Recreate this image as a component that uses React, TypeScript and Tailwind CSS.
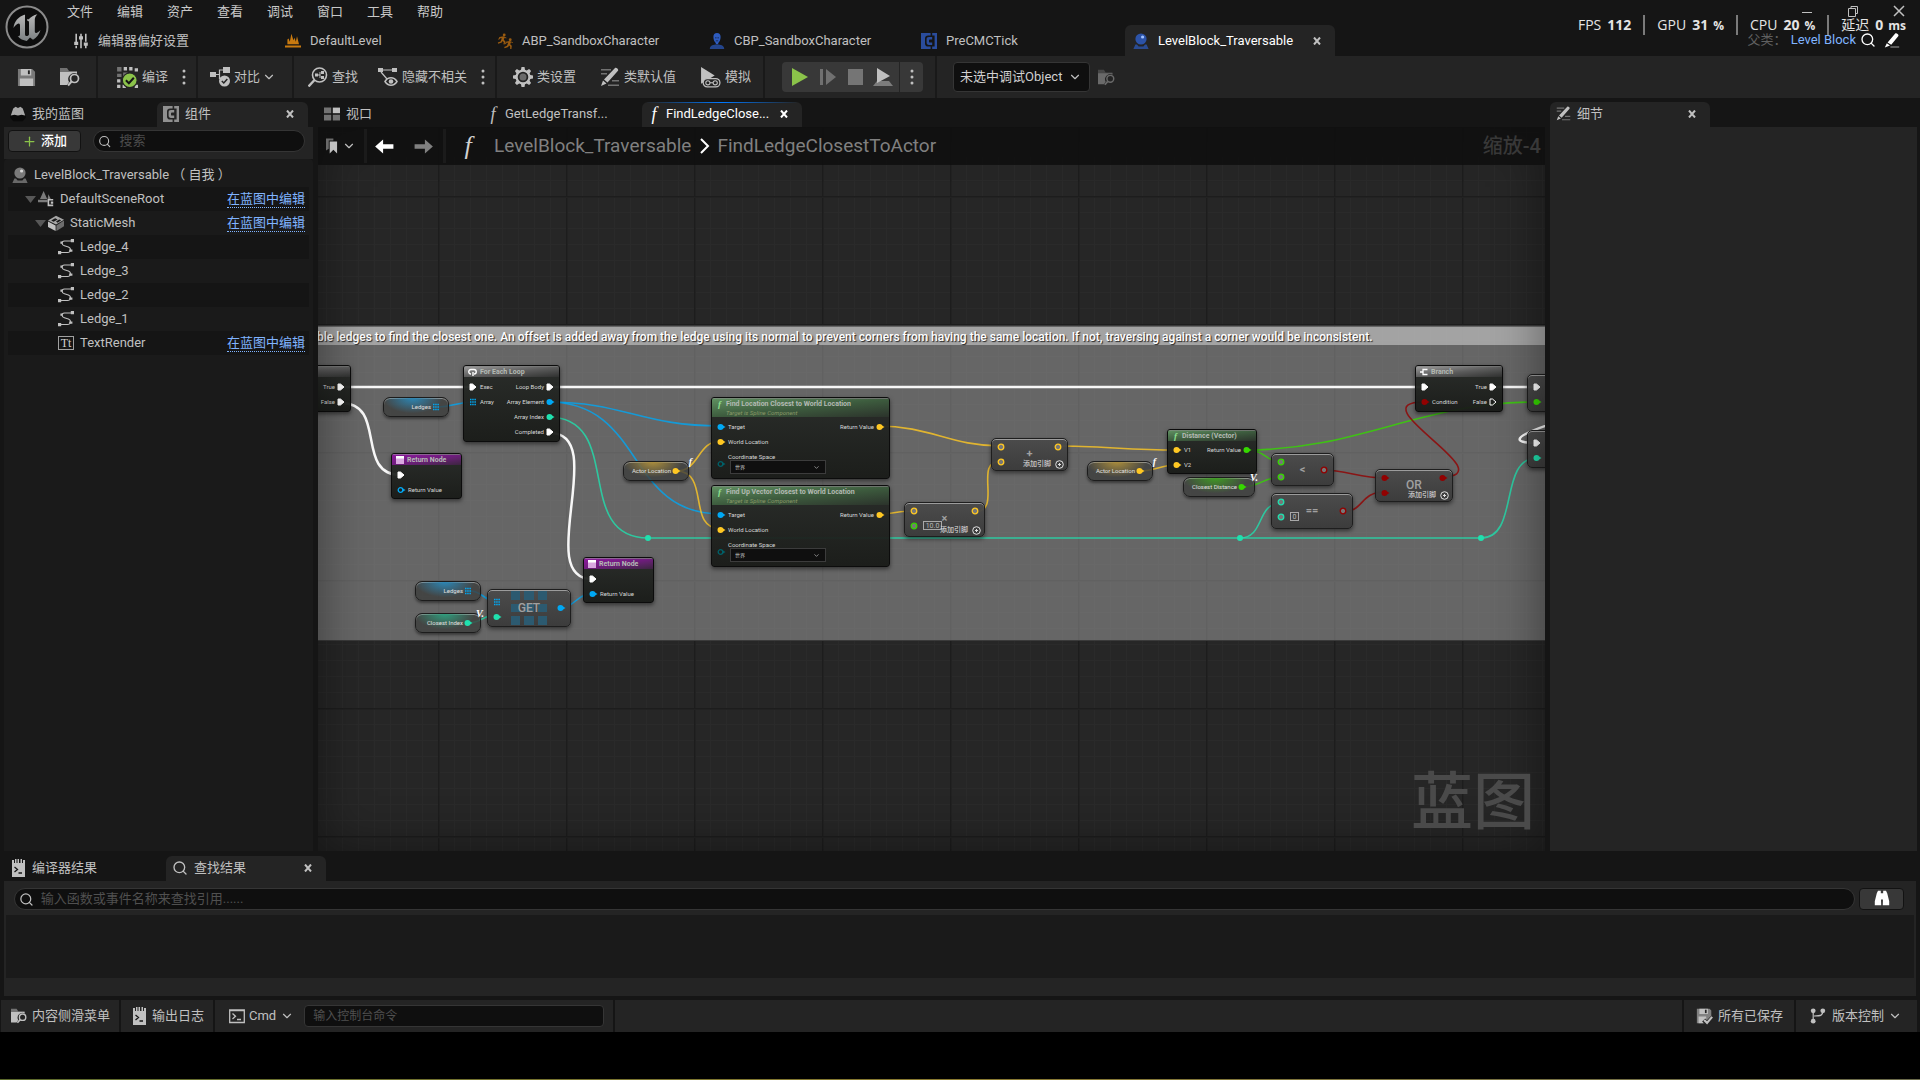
import type { ReactNode } from "react";
import { Search, ChevronDown, Plus } from "lucide-react";
import clsx from "clsx";

type Box = { x: number; y: number; w: number; h: number };

// ---------- icons ----------

function Svg({ size = 16, className, children }: { size?: number; className?: string; children: ReactNode }) {
  return (
    <svg width={size} height={size} viewBox="0 0 20 20" fill="currentColor" className={clsx("shrink-0", className)} aria-hidden>
      {children}
    </svg>
  );
}

const UnrealLogo = () => (
  <svg width="44" height="44" viewBox="0 0 44 44" aria-hidden>
    <defs>
      <linearGradient id="steel" x1="0" y1="0" x2="0" y2="1">
        <stop offset="0" stopColor="#b8b8b8" />
        <stop offset="1" stopColor="#7b8082" />
      </linearGradient>
    </defs>
    <circle cx="22" cy="22" r="20.5" fill="#0d0d0d" stroke="#8b8b8b" strokeWidth="2" />
    <path
      fill="url(#steel)"
      d="M20 9.500C13.500 11.500 9 16.500 8.500 23c1.500-2.500 3.500-4.300 5-4.500 1.300-.1 1.500 1 1.500 2.300v8.700c0 1.600-1.200 1.800-2.300 1.600C15 34 18 35.600 21.800 36l3.200-3.500 3 2.200c3.500-2 6.300-5.500 7.500-9.700-1.800 1.800-3.300 3-4.500 2.900-1.100-.1-1.200-1-1.200-2V14.500c0-1.800 1-3.700 2.600-5.300-3.500.8-6.700 2.700-8.900 5.300-1-.8-1.300-.5-1.300.5v.8c1.300-.2 1.800.6 1.800 1.700v11.700c0 1-1.200 1.900-2.300 1.900-1.200 0-1.700-.9-1.700-2.100V14.200c0-2 .1-3.200 0-4.700Z"
    />
  </svg>
);

const SlidersIcon = () => (
  <Svg>
    <path d="M3 1h2v11H3zM3 16h2v3H3zM1.500 11h5v4h-5zM9 1h2v3H9zM9 8h2v11H9zM7.500 4h5v4h-5zM15 1h2v10h-2zM15 16h2v3h-2zM13.500 12h5v4h-5z" />
  </Svg>
);
const LevelIcon = () => (
  <Svg className="text-[#c87a10]">
    <path d="M3 14V8l1.500-1L6 11 8 1l2.500 8L12 6l1.500 5L15 4l2.500 10zM0 15.500h20v2.500H0z" />
  </Svg>
);
const RunnerIcon = () => (
  <Svg className="text-[#9a5b10]">
    <circle cx="9" cy="2.500" r="1.800" />
    <path d="m8 4-5 1-1.500 3 1 .5L4 6.500l2 0-1.500 4L1 12l.5 1.500 4.500-1.500 1-2 1.500 1.500L8 14l1.500.5 1-4-2-2L9.500 6l2 1 .5-1z" />
    <circle cx="16.500" cy="8.500" r="1.800" />
    <path d="m15.500 10-4.500 1-1 2.500 1 .5 1-1.700h2l-1.500 3.700-3.500 1.500.5 1.500 4.500-1.500 1-2 1.500 1.500v3h1.500l.5-4-2-2 1-2.500 2 1 .5-1z" />
  </Svg>
);
const PersonIcon = () => (
  <Svg className="text-[#2e5cc0]">
    <path d="M10 0C7 0 5.500 2 5.500 5c0 3.500 1.500 6.500 3 7.500v1.500h3v-1.500c1.500-1 3-4 3-7.500 0-3-1.500-5-4.500-5Z" />
    <path d="M1 20c0-3.500 3-5 7-5.500h4c4 .5 7 2 7 5.500z" fill="#24458c" />
    <path d="M7.500 5.500h2v1h-2zM10.500 5.500h2v1h-2zM8.500 9.500h3v.8h-3z" fill="#101c38" />
  </Svg>
);
const ClassIcon = ({ className }: { className?: string }) => (
  <Svg className={className}>
    <path fillRule="evenodd" d="M0 0h12v3H9C6.500 3 5 4.500 5 7v6c0 2.500 1.500 4 4 4h3v3H0zM14 0h6v20h-6v-3h3V3h-3zM10 5h4v3h-2.500C10.500 8 10 8.500 10 9.500v1c0 1 .5 1.500 1.500 1.500H14v3h-4c-2 0-3-1-3-3V8c0-2 1-3 3-3z" />
  </Svg>
);
const ActorIcon = ({ className, glint = "#9ec0ff" }: { className?: string; glint?: string }) => (
  <Svg className={className}>
    <path d="M3 14.500h2L7 17h6l2-2.500h2L19.500 20H.5z" opacity=".7" />
    <circle cx="10" cy="7.500" r="7" opacity=".85" />
    <circle cx="12" cy="5" r="2" fill={glint} />
  </Svg>
);
const SaveIcon = () => (
  <Svg size={19}>
    <path d="M1 1h15l3 3v15H1z" opacity=".55" />
    <path d="M4 1h11v7H4zM3 11h14v8H3z" />
    <path d="M11.500 2.500h2v4h-2z" fill="#242424" />
  </Svg>
);
const BrowseIcon = ({ size = 20, className }: { size?: number; className?: string }) => (
  <Svg size={size} className={className}>
    <path d="M0 1h7l2 3h8v2H0z" opacity=".5" />
    <path d="M0 5h17v1.800a6 6 0 0 0-8 8.200l-2 3H0z" />
    <circle cx="14.500" cy="11.500" r="4" fill="none" stroke="currentColor" strokeWidth="1.700" />
    <path d="m11.500 14.500-3.500 4" stroke="currentColor" strokeWidth="2" />
  </Svg>
);
const CompileIcon = () => (
  <Svg size={22}>
    <path d="M1 1h4v4H1zM6.500 6h4v4h-4zM1 7h4v3H1z" opacity=".5" />
    <path d="M7 1h3v3H7zM12 1h3v3h-3zM17 2h3v3h-3zM1 12h3v3H1zM1 17h3v3H1zM6 17h3v3H6zM17 17h3v3h-3z" />
    <circle cx="12.500" cy="13" r="6.700" fill="#8bc34a" stroke="#242424" />
    <path d="m9 13 2.700 2.700 4.500-5" fill="none" stroke="#151515" strokeWidth="1.800" />
  </Svg>
);
const DiffIcon = () => (
  <Svg size={20}>
    <path d="M0 5h6v5H0zM13 0h7v6h-7z" />
    <path d="M6 7.500h4M13 3H9.500v9" fill="none" stroke="currentColor" strokeWidth="1.200" />
    <circle cx="14.500" cy="14" r="5.500" />
    <path d="m11.800 14 2 2 3.500-4" fill="none" stroke="#242424" strokeWidth="1.500" />
  </Svg>
);
const FindIcon = () => (
  <Svg size={20}>
    <circle cx="11.500" cy="8" r="7" fill="none" stroke="currentColor" strokeWidth="1.600" />
    <path d="m6.500 13-6 6.500" stroke="currentColor" strokeWidth="2.400" />
    <path d="M7 6.500h3v3H7zM13 4h3v3h-3zM13 9h3v3h-3zM10 7.500h2v1h-2zM11.500 5h1v6h-1z" />
  </Svg>
);
const HideIcon = () => (
  <Svg size={20}>
    <path d="M0 1h5v4H0zM14 1h5v4h-5z" />
    <path d="M5 3h9M3 5l6 7" stroke="currentColor" strokeWidth="1.200" />
    <path d="M7 14.500c3-5 9-5 12 0-3 5-9 5-12 0Z" fill="none" stroke="currentColor" strokeWidth="1.500" />
    <circle cx="13" cy="14.500" r="2.300" />
  </Svg>
);
const GearIcon = () => (
  <Svg size={20}>
    <path
      fillRule="evenodd"
      d="M8.500 0h3l.5 2.700 1.800.7 2.300-1.500 2 2-1.500 2.300.7 1.800 2.700.5v3l-2.700.5-.7 1.800 1.500 2.300-2 2-2.300-1.500-1.800.7-.5 2.700h-3L8 17.300l-1.800-.7-2.300 1.500-2-2 1.500-2.300L2.700 12 0 11.500v-3L2.700 8l.7-1.800L1.900 3.900l2-2 2.300 1.500L8 2.700zM10 4.700a5.300 5.300 0 1 0 0 10.600 5.300 5.300 0 0 0 0-10.600Z"
    />
    <circle cx="10" cy="10" r="3.500" opacity=".45" />
  </Svg>
);
const PencilIcon = ({ size = 20 }: { size?: number }) => (
  <Svg size={size}>
    <path d="M1 2h10v1.500H1zM1 6h6v1.500H1zM12 13h7v1.500h-7zM8 17.500h11V19H8z" opacity=".5" />
    <path d="M15 1c1-1.200 4 1 3 2.800L7.500 15.500 4 12.500zM3 13.500 6.500 16.500 1 19z" />
  </Svg>
);
const SmallPencilIcon = () => (
  <Svg>
    <path d="M8 18h11v1.500H8z" opacity=".5" />
    <path d="M14 2c1-1.500 5 1 4 3L9 16l-4.500-3zM3.500 14 7.500 17 1 19.500z" />
  </Svg>
);
const SimulateIcon = () => (
  <Svg size={21}>
    <path d="M1 0 14 8 1 16z" />
    <path d="M4 12h14v7H4z" fill="#242424" />
    <rect x="3" y="11" width="16" height="8" rx="4" fill="#242424" stroke="currentColor" strokeWidth="1.200" />
    <circle cx="7.500" cy="15" r="2" fill="none" stroke="currentColor" />
    <circle cx="14.500" cy="15" r="2" fill="none" stroke="currentColor" />
    <path d="M9.500 14.500h3v1h-3z" />
  </Svg>
);
const BookIcon = () => (
  <Svg className="text-[#a8a8a8]">
    <path d="M0 14 4 3l3-2 3 1.500L13 1l3 2 4 11-4 5H4z" fill="#0a0a0a" />
    <path d="M1 12 4 3l3-2 3 1.500L13 1l3 2 3 9-4.500-1-4.500 1-4.500-1z" />
  </Svg>
);
const ViewportIcon = () => (
  <Svg>
    <path d="M0 2h9v7H0zM0 11h9v7H0zM11 11h9v7h-9z" opacity=".55" />
    <path d="M11 2h9v7h-9z" />
  </Svg>
);
const SceneIcon = () => (
  <Svg>
    <path d="m7 0 4.500 10h-9zM0 11h12v3H0zM13 4l3 6h-4z" opacity=".6" />
    <path d="M12 10h7v2h-5v5h5v2h-7zM16 13h3v3h-3z" />
  </Svg>
);
const MeshIcon = () => (
  <Svg>
    <path d="m0 7 10-6 10 5-10 6z" opacity=".85" />
    <path d="m0 8 9.500 5v7L0 15z" />
    <path d="m10.500 13 9.500-6v7l-9.500 6z" opacity=".5" />
    <path d="m4 7 5-3 3 1.500-5 3zM10 8l4-2.500 2.500 1.200-4.500 3z" fill="#1a1a1a" />
  </Svg>
);
const SplineIcon = () => (
  <Svg>
    <path d="M17 2.500H8c-4 0-4 5 0 6l5 1.500c4 1.500 3 7-1 7H3" fill="none" stroke="currentColor" strokeWidth="1.300" />
    <path d="M16 0h4v4h-4zM3 3h3v3H3zM14 13h4v3h-4zM0 15h4v4H0z" />
  </Svg>
);
const TextRenderIcon = () => (
  <span className="flex h-[14px] w-4 shrink-0 items-center justify-center border border-[#a0a0a0] font-['Liberation_Serif',serif] text-[12px] leading-none text-[#d0d0d0]">Tt</span>
);
const LogIcon = () => (
  <svg width="13" height="18" viewBox="0 0 13 18" fill="currentColor" className="shrink-0" aria-hidden>
    <path d="M0 1h2v3h1V0h1.500v4h1V0H7v4h1.500V0H10v4h1V1h2v17H0z" />
    <path d="m2.500 8 3 2.500-3 2.500M6.500 14H10" fill="none" stroke="#151515" strokeWidth="1.300" />
  </svg>
);
const TerminalIcon = () => (
  <svg width="16" height="16" viewBox="0 0 16 16" fill="none" stroke="currentColor" className="shrink-0" aria-hidden>
    <path d="M.7 2h14.600v12.500H.7zM.5 2.500h15" strokeWidth="1.300" />
    <path d="m3.500 5.500 3 2.700-3 2.700M8 11.500h4" strokeWidth="1.300" />
  </svg>
);
const SavedIcon = () => (
  <Svg size={17}>
    <path d="M1 1h15l2 2v7l-5 5-2-2-3 5H1z" opacity=".6" />
    <path d="M4 1h10v6H4zM3 10h9v8H3z" />
    <path d="M10.500 2h2v4h-2z" fill="#242424" />
    <path d="m9 14 4 4 6.500-7" fill="none" stroke="#242424" strokeWidth="5" />
    <path d="m9.500 14 3.500 3.500 6-7" fill="none" stroke="currentColor" strokeWidth="2.500" />
  </Svg>
);
const BranchIcon = () => (
  <Svg>
    <circle cx="4" cy="3.500" r="3" />
    <circle cx="16" cy="3.500" r="3" />
    <circle cx="4" cy="16.500" r="3" />
    <path d="M4 4v12M16 4c0 5-2 6-11 6" fill="none" stroke="currentColor" strokeWidth="1.500" />
  </Svg>
);
const BinocularsIcon = () => (
  <Svg size={16} className="text-white">
    <path d="M5 1h3.500v3L9 19H1v-5L3.500 4zM11.500 1H15l1.500 3L19 14v5h-8zM8.500 4h3v8h-3z" />
  </Svg>
);
const CloseIcon = () => (
  <svg width="8" height="8" viewBox="0 0 8 8" fill="none" stroke="currentColor" strokeWidth="2" aria-hidden>
    <path d="m1 .5 6 7M7 .5l-6 7" />
  </svg>
);
const ArrowIcon = ({ flip }: { flip?: boolean }) => (
  <svg width="19" height="15" viewBox="0 0 20 16" fill="currentColor" className={clsx("shrink-0", flip && "rotate-180")} aria-hidden>
    <path d="M0 8 8.500.5v5H19.500v5h-11v5z" />
  </svg>
);
const FnGlyph = ({ className }: { className: string }) => (
  <i className={clsx("shrink-0 font-['Liberation_Serif',serif] leading-none", className)}>f</i>
);
const Dots = () => (
  <svg width="4" height="18" viewBox="0 0 4 18" fill="currentColor" aria-hidden>
    <circle cx="2" cy="3" r="1.500" />
    <circle cx="2" cy="9" r="1.500" />
    <circle cx="2" cy="15" r="1.500" />
  </svg>
);

// ---------- chrome ----------

const MENUS = ["文件", "编辑", "资产", "查看", "调试", "窗口", "工具", "帮助"];

const ASSET_TABS = [
  { label: "编辑器偏好设置", icon: <SlidersIcon /> },
  { label: "DefaultLevel", icon: <LevelIcon /> },
  { label: "ABP_SandboxCharacter", icon: <RunnerIcon /> },
  { label: "CBP_SandboxCharacter", icon: <PersonIcon /> },
  { label: "PreCMCTick", icon: <ClassIcon className="text-[#2a4c9c]" /> },
];

function Stat({ label, value, unit }: { label: string; value: string; unit?: string }) {
  return (
    <span className="flex items-baseline gap-1.5 px-3 text-[#e4e4e4]">
      {label}
      <b>{value}</b>
      {unit && <b className="-ml-px text-xs">{unit}</b>}
    </span>
  );
}

function TitleBar() {
  return (
    <header className="relative flex h-14 bg-[#151515]">
      <div className="w-[65px] shrink-0 pt-[5px] pl-[5px]">
        <UnrealLogo />
      </div>
      <div className="flex min-w-0 flex-1 flex-col">
        <nav className="-ml-2.5 flex h-6 items-center">
          {MENUS.map((m) => (
            <button key={m} type="button" className="px-3 text-[#c8c8c8]">{m}</button>
          ))}
        </nav>
        <div className="mt-px flex h-[31px]">
          {ASSET_TABS.map((t) => (
            <button key={t.label} type="button" className="flex w-[212px] shrink-0 items-center gap-[9px] pl-2">
              {t.icon}
              {t.label}
            </button>
          ))}
          <div className="flex w-[210px] shrink-0 items-center gap-[9px] rounded-t-md bg-[#242424] pl-2 text-white">
            <ActorIcon className="text-[#2e5cc0]" />
            LevelBlock_Traversable
            <button type="button" aria-label="关闭" className="mr-3.5 ml-auto text-[#c0c0c0]"><CloseIcon /></button>
          </div>
        </div>
      </div>

      <div className="absolute top-1 right-[15px] flex gap-[34px] text-[#c0c0c0]">
        <button type="button" aria-label="最小化">
          <svg width="12" height="14" viewBox="0 0 12 14" aria-hidden><path d="M1 8.500h10" stroke="currentColor" /></svg>
        </button>
        <button type="button" aria-label="还原">
          <svg width="12" height="14" viewBox="0 0 12 14" fill="none" stroke="currentColor" aria-hidden><path d="M1.500 4.500h7v8h-7zM4 4V2.500h6.500v7H9" /></svg>
        </button>
        <button type="button" aria-label="关闭窗口">
          <svg width="12" height="14" viewBox="0 0 12 14" aria-hidden><path d="m1 2 10 10M11 2 1 12" stroke="currentColor" strokeWidth="1.500" /></svg>
        </button>
      </div>
      {/* performance overlay, floats above the window's own controls */}
      <div className="absolute top-[15px] right-0.5 flex h-5 items-end divide-x-2 divide-[#7a7a7a] font-['Open_Sans','Noto_Sans_CJK_SC',sans-serif] text-[14px] leading-5">
        <Stat label="FPS" value="112" />
        <Stat label="GPU" value="31" unit="%" />
        <Stat label="CPU" value="20" unit="%" />
        <Stat label="延迟" value="0" unit="ms" />
      </div>
      <div className="absolute top-8 right-5 flex items-center text-[#606060]">
        父类：
        <a href="#parent" className="ml-1 text-[#80b4ff]">Level Block</a>
        <button type="button" aria-label="查找" className="ml-1 text-white"><Search size={16} /></button>
        <button type="button" aria-label="编辑" className="ml-2 text-white"><SmallPencilIcon /></button>
      </div>
    </header>
  );
}

const Sep = () => <span className="w-0.5 shrink-0 self-stretch bg-[#191919]" />;

function Tool({ icon, label, className }: { icon: ReactNode; label: string; className?: string }) {
  return (
    <button type="button" className={clsx("flex shrink-0 items-center gap-1", className)}>
      {icon}
      {label}
    </button>
  );
}

function Toolbar() {
  return (
    <div className="flex h-[42px] items-center bg-[#242424]">
      <button type="button" aria-label="保存" className="ml-[17px]"><SaveIcon /></button>
      <button type="button" aria-label="浏览" className="mr-4 ml-6"><BrowseIcon /></button>
      <Sep />
      <Tool icon={<CompileIcon />} label="编译" className="ml-[18px]" />
      <button type="button" aria-label="编译选项" className="mr-2.5 ml-3.5"><Dots /></button>
      <Sep />
      <Tool icon={<DiffIcon />} label="对比" className="ml-3" />
      <ChevronDown size={14} className="mr-4 ml-0.5 shrink-0" />
      <Sep />
      <Tool icon={<FindIcon />} label="查找" className="ml-3.5" />
      <Tool icon={<HideIcon />} label="隐藏不相关" className="ml-5" />
      <button type="button" aria-label="隐藏选项" className="mr-2.5 ml-3.5"><Dots /></button>
      <Sep />
      <Tool icon={<GearIcon />} label="类设置" className="ml-4" />
      <Tool icon={<PencilIcon />} label="类默认值" className="ml-6" />
      <Tool icon={<SimulateIcon />} label="模拟" className="mr-3 ml-6" />
      <Sep />
      <div className="mr-3 ml-[17px] flex h-[30px] w-[141px] shrink-0 items-center rounded bg-[#383838]">
        <button type="button" aria-label="播放" className="ml-2.5 text-[#8bc34a]">
          <svg width="16" height="18" aria-hidden><path d="M0 0 16 9 0 18z" fill="currentColor" /></svg>
        </button>
        <button type="button" aria-label="步进" className="ml-3 text-[#707070]">
          <svg width="16" height="16" fill="currentColor" aria-hidden><path d="M0 0h3v16H0zM6 0l10 8L6 16z" /></svg>
        </button>
        <button type="button" aria-label="停止" className="ml-3 h-4 w-[15px] bg-[#757575]" />
        <button type="button" aria-label="弹出" className="ml-2.5">
          <svg width="20" height="18" fill="currentColor" aria-hidden>
            <path d="M4 13h12l4 5H0z" opacity=".5" />
            <path d="m4 0 13 8L4 15z" />
          </svg>
        </button>
        <span className="ml-1.5 h-full w-px bg-[#242424]" />
        <button type="button" aria-label="播放选项" className="ml-2.5"><Dots /></button>
      </div>
      <Sep />
      <div className="relative mr-2 ml-4 shrink-0">
        <select aria-label="调试对象" className="h-[30px] w-[137px] appearance-none rounded border border-[#353535] bg-[#0f0f0f] pl-1.5 text-[#d0d0d0]">
          <option>未选中调试Object</option>
        </select>
        <ChevronDown size={14} className="pointer-events-none absolute top-2 right-2" />
      </div>
      <BrowseIcon size={17} className="text-[#6a6a6a]" />
    </div>
  );
}

function DockTab({ icon, label, active, accent, className }: { icon: ReactNode; label: string; active?: boolean; accent?: boolean; className: string }) {
  return (
    <div className={clsx("relative flex h-[25px] shrink-0 items-center gap-1.5 pb-0.5 pl-1.5", active && "rounded-t-md bg-[#242424]", className)}>
      {accent && <span className="absolute inset-x-1 top-0 h-px bg-linear-to-r from-transparent via-[#0078ff] to-transparent" />}
      {icon}
      <button type="button">{label}</button>
      {active && (
        <button type="button" aria-label="关闭" className="mr-3.5 ml-auto"><CloseIcon /></button>
      )}
    </div>
  );
}

// ---------- components panel ----------

const TREE = [
  { label: "LevelBlock_Traversable （ 自我 ）", icon: <ActorIcon className="text-[#8c8c8c]" glint="#d8d8d8" />, pad: "pl-1" },
  { label: "DefaultSceneRoot", icon: <SceneIcon />, pad: "pl-[17px]", arrow: true, edit: true },
  { label: "StaticMesh", icon: <MeshIcon />, pad: "pl-[27px]", arrow: true, edit: true },
  { label: "Ledge_4", icon: <SplineIcon />, pad: "pl-[50px]" },
  { label: "Ledge_3", icon: <SplineIcon />, pad: "pl-[50px]" },
  { label: "Ledge_2", icon: <SplineIcon />, pad: "pl-[50px]" },
  { label: "Ledge_1", icon: <SplineIcon />, pad: "pl-[50px]" },
  { label: "TextRender", icon: <TextRenderIcon />, pad: "pl-[50px]", edit: true },
];

function ComponentsPanel() {
  return (
    <aside className="flex w-[309px] shrink-0 flex-col">
      <div className="flex h-[29px] items-end">
        <DockTab icon={<BookIcon />} label="我的蓝图" className="w-[153px]" />
        <DockTab icon={<ClassIcon className="text-[#909090]" />} label="组件" active className="w-[151px]" />
      </div>
      <div className="flex h-8 items-start gap-3 bg-[#242424] pt-[3px] pr-2 pl-1">
        <button type="button" className="flex h-[22px] w-[73px] items-center justify-center gap-1 rounded border border-[#121212] bg-[#383838] font-medium text-white">
          <Plus size={15} className="text-[#8bc34a]" />
          添加
        </button>
        <label className="flex h-[22px] flex-1 items-center gap-2 rounded-full border border-[#353535] bg-[#0f0f0f] pl-1">
          <Search size={15} />
          <input type="text" aria-label="搜索组件" placeholder="搜索" className="w-full min-w-0 bg-transparent outline-none placeholder:text-[#4c4c4c]" />
        </label>
      </div>
      <ul className="flex-1 rounded-t bg-[#1a1a1a] px-1 pt-1">
        {TREE.map((row) => (
          <li key={row.label} className={clsx("flex h-6 items-center gap-1.5 pr-1 even:bg-[#151515]", row.pad)}>
            {row.arrow && (
              <svg width="11" height="7" viewBox="0 0 11 7" className="-mr-1 shrink-0 text-[#575757]" aria-hidden>
                <path d="M0 0h11L5.500 7z" fill="currentColor" />
              </svg>
            )}
            {row.icon}
            <span>{row.label}</span>
            {row.edit && (
              <a href="#edit" className="ml-auto border-b border-dotted border-[#80b4ff] leading-4 text-[#80b4ff]">在蓝图中编辑</a>
            )}
          </li>
        ))}
      </ul>
    </aside>
  );
}

// ---------- graph ----------

const COLORS = {
  exec: "#ffffff",
  object: "#00a8f4",
  int: "#20e0ae",
  vector: "#ffc823",
  float: "#36d800",
  bool: "#920101",
  enum: "#006068",
};
type Kind = keyof typeof COLORS;

function Pin({ kind, hollow, ring, array }: { kind: Kind; hollow?: boolean; ring?: boolean; array?: boolean }) {
  const color = COLORS[kind];
  return (
    <svg width="10" height="8" viewBox="0 0 10 8" className="shrink-0" aria-hidden>
      {kind === "exec" ? (
        <path d="M2 1h2.500L8 4 4.500 7H2z" fill={hollow ? "none" : color} stroke={color} />
      ) : array ? (
        <path d="M2 1.500h6M2 4h6M2 6.500h6" stroke={color} strokeWidth="1.500" strokeDasharray="1.500 .7" />
      ) : ring ? (
        <circle cx="5" cy="4" r="2.800" fill="#777" stroke={color} strokeWidth="1.300" />
      ) : (
        <>
          <circle cx="4.500" cy="4" r={hollow ? 2.300 : 3} fill={hollow ? "none" : color} stroke={color} strokeWidth={hollow ? 1.300 : 0} />
          <path d="m7 2.500 2.500 1.500L7 5.500z" fill={color} />
        </>
      )}
    </svg>
  );
}

const NODE_TONES = {
  gray: "from-[#9a9a9a] via-[#5c5c5c] to-[#303130]",
  purple: "from-[#8c1a9c] via-[#6e1c7c] to-[#3c2440]",
  green: "from-[#5f8f60] via-[#3d5c3e] to-[#2b332b]",
};

function Node({ box, tone, icon, title, subtitle, children }: { box: Box; tone: keyof typeof NODE_TONES; icon?: ReactNode; title: string; subtitle?: string; children: ReactNode }) {
  return (
    <div
      className="absolute overflow-hidden rounded-[3px] border border-[#0c0c0c] bg-linear-to-b from-[#272a27]/95 to-[#181a17]/95 text-[6px] leading-[7px] text-[#d8d8d8] shadow-[0_2px_4px_rgba(0,0,0,0.5)]"
      style={{ left: box.x, top: box.y, width: box.w, height: box.h }}
    >
      <div className={clsx("border-t border-white/30 bg-linear-to-br px-1", NODE_TONES[tone], subtitle ? "h-[19px]" : "h-[11px]")}>
        <div className="flex h-2.5 items-center gap-[3px] text-[7px] font-bold whitespace-nowrap text-[#b4bab4]">
          {icon}
          {title}
        </div>
        {subtitle && <p className="pl-2.5 text-[6px] leading-[7px] whitespace-nowrap text-[#8a9a68] italic">{subtitle}</p>}
      </div>
      {children}
    </div>
  );
}

type PinSpec = { kind: Kind; label?: string; hollow?: boolean; array?: boolean };

function PinRow({ left, right }: { left?: PinSpec; right?: PinSpec }) {
  return (
    <div className="flex h-[15px] items-center justify-between px-1 whitespace-nowrap">
      <span className="flex items-center gap-0.5">
        {left && <Pin {...left} />}
        {left?.label}
      </span>
      <span className="flex items-center gap-px">
        {right?.label}
        {right && <Pin {...right} />}
      </span>
    </div>
  );
}

const GreenF = () => <FnGlyph className="w-[7px] text-center text-[9px] font-bold text-[#8fe08f]" />;
const ReturnIcon = () => (
  <svg width="8" height="8" viewBox="0 0 8 8" aria-hidden>
    <path d="M0 0h8v8H0z" fill="#d9a8e0" />
    <path d="M0 0h8v2.500H0z" fill="#fff" />
  </svg>
);
const LoopIcon = () => (
  <svg width="9" height="8" viewBox="0 0 9 8" fill="none" stroke="#fff" strokeWidth="1.400" aria-hidden>
    <path d="M3 6C0 6 0 1.500 3 1.500h3c3 0 3 4.500 0 4.500M5 4v4" />
  </svg>
);
const SplitIcon = () => (
  <svg width="8" height="8" viewBox="0 0 8 8" fill="none" stroke="#fff" strokeWidth="1.300" aria-hidden>
    <path d="M0 4h3M7.500 1.500H3v5h4.500" />
  </svg>
);

function SplineNode({ x, y, title }: { x: number; y: number; title: string }) {
  return (
    <Node box={{ x, y, w: 179, h: 82 }} tone="green" icon={<GreenF />} title={title} subtitle="Target is Spline Component">
      <div className="pt-0.5">
        <PinRow left={{ kind: "object", label: "Target" }} right={{ kind: "vector", label: "Return Value" }} />
        <PinRow left={{ kind: "vector", label: "World Location" }} />
      </div>
      <div className="flex items-center gap-0.5 pt-1 pl-1">
        <Pin kind="enum" hollow />
        <label className="block">
          Coordinate Space
          <span className="relative ml-0.5 block">
            <select className="block h-[14px] w-24 appearance-none border border-[#3c3c3c] bg-[#0f0f0f] pl-1 text-[5px] leading-[7px] text-[#c0c0c0]">
              <option>世界</option>
            </select>
            <ChevronDown size={7} className="pointer-events-none absolute top-1 right-1.5" />
          </span>
        </label>
      </div>
    </Node>
  );
}

const GLOWS = {
  object: "bg-[radial-gradient(ellipse_at_45%_0%,#2c86b4_0%,transparent_60%)]",
  int: "bg-[radial-gradient(ellipse_at_45%_0%,#2f9c7c_0%,transparent_60%)]",
  vector: "bg-[radial-gradient(ellipse_at_45%_0%,#a98c3c_0%,transparent_60%)]",
  float: "bg-[radial-gradient(ellipse_at_45%_0%,#3f9a24_0%,transparent_60%)]",
};

function Getter({ x, y, w = 66, label, kind, array, badge }: { x: number; y: number; w?: number; label: string; kind: keyof typeof GLOWS; array?: boolean; badge?: string }) {
  return (
    <div
      className="absolute rounded-[7px] border border-[#1c1c1c] bg-[#3c3d3c]/80 shadow-[0_2px_3px_rgba(0,0,0,0.45),inset_0_1px_0_rgba(255,255,255,0.4)]"
      style={{ left: x, top: y, width: w, height: 20 }}
    >
      <div className={clsx("flex h-full items-center justify-end rounded-[7px] pr-[7px] text-[6px] whitespace-nowrap text-[#e0e0e0]", GLOWS[kind])}>
        {label}
        <Pin kind={kind} array={array} />
      </div>
      {badge && (
        <i className="absolute -top-[5px] -right-1 font-['Liberation_Serif',serif] text-[10px] leading-none font-bold text-white">{badge}</i>
      )}
    </div>
  );
}

type MathNodeProps = {
  box: Box;
  inputs: ReactNode[];
  output: ReactNode;
  symbol?: string;
  big?: boolean;
  addPin?: boolean;
  tall?: boolean;
  children?: ReactNode;
};

function MathNode({ box, inputs, output, symbol, big, addPin, tall, children }: MathNodeProps) {
  return (
    <div
      className="absolute flex justify-between rounded-[5px] border border-[#1e1e1e] bg-linear-to-b from-[#4a4a4a]/95 to-[#3a3a3a]/95 px-1 shadow-[0_2px_4px_rgba(0,0,0,0.5),inset_0_1px_0_rgba(255,255,255,0.45)]"
      style={{ left: box.x, top: box.y, width: box.w, height: box.h }}
    >
      {children}
      <div className={clsx("relative", tall && "pt-1")}>
        {inputs.map((p, i) => (
          <div key={i} className="flex h-[15px] items-center gap-1">{p}</div>
        ))}
      </div>
      {symbol && (
        <span className={clsx("absolute inset-0 flex items-center justify-center text-[#a0a0a0]", big ? "text-[12px] font-medium" : "text-[11px] font-bold", addPin && "pb-0.5")}>
          {symbol}
        </span>
      )}
      <div className={clsx("relative flex items-center", addPin ? "h-[15px]" : "h-full")}>{output}</div>
      {addPin && (
        <button type="button" className="absolute right-[3px] bottom-0 flex h-3 items-center gap-1 text-[7px] whitespace-nowrap text-[#e0e0e0]">
          添加引脚
          <svg width="9" height="9" viewBox="0 0 9 9" fill="none" stroke="currentColor" aria-hidden>
            <circle cx="4.500" cy="4.500" r="3.800" />
            <path d="M4.500 3v3M3 4.500h3" />
          </svg>
        </button>
      )}
    </div>
  );
}

const valueBox = "h-[9px] border border-[#a8a8a8] bg-transparent text-center text-[7px] leading-[7px] text-[#b8b8b8]";

const WIRES: { kind: Kind; d: string }[] = [
  { kind: "exec", d: "M341 387H473" },
  { kind: "exec", d: "M550 387H1424" },
  { kind: "exec", d: "M1493 387H1537" },
  { kind: "exec", d: "M341 403C388 403 354 475 401 475" },
  { kind: "exec", d: "M550 433C610 433 533 579 592 579" },
  { kind: "exec", d: "M1560 421C1500 440 1520 443 1537 443" },
  { kind: "object", d: "M438 407C450 407 460 402 472 402" },
  { kind: "object", d: "M548 402C625 402 640 426 721 426" },
  { kind: "object", d: "M548 402C645 402 625 514 721 514" },
  { kind: "object", d: "M470 591C483 591 483 601 496 601" },
  { kind: "object", d: "M559 608C575 608 576 594 592 594" },
  { kind: "int", d: "M468 623C482 623 482 615 497 615" },
  { kind: "int", d: "M548 417C625 417 572 538 648 538H1481C1520 538 1498 458 1537 458" },
  { kind: "int", d: "M1240 538C1265 538 1256 503 1281 503" },
  { kind: "vector", d: "M676 471C700 471 697 441 721 441" },
  { kind: "vector", d: "M676 471C711 471 686 529 721 529" },
  { kind: "vector", d: "M878 426C930 426 950 446 1001 446" },
  { kind: "vector", d: "M878 514C892 514 899 511 913 511" },
  { kind: "vector", d: "M974 512C1004 512 972 461 1001 461" },
  { kind: "vector", d: "M1057 446C1100 446 1130 450 1176 450" },
  { kind: "vector", d: "M1140 471C1156 471 1160 465 1176 465" },
  { kind: "float", d: "M1246 450C1266 450 1266 462 1281 462" },
  { kind: "float", d: "M1246 450C1360 450 1420 402 1537 402" },
  { kind: "float", d: "M1242 487C1260 487 1264 477 1281 477" },
  { kind: "bool", d: "M1323 470C1346 470 1360 478 1384 478" },
  { kind: "bool", d: "M1342 512C1364 512 1360 492 1384 492" },
  { kind: "bool", d: "M1440 477C1510 477 1355 402 1424 402" },
];

// Graph space is panned so that its (318, 127) sits at the panel's corner.
function GraphCanvas() {
  return (
    <div className="absolute -top-[127px] -left-[318px] h-full w-full">
      <div className="absolute top-[325px] left-[200px] h-[316px] w-[1800px] border-y border-[#3a3a3a] bg-[#a5a5a5]/50">
        <div className="mt-px flex h-[18px] items-center bg-[#c4c4c4]/65 pt-0.5 pl-[117px] text-[12px] font-medium whitespace-nowrap text-white [text-shadow:1px_1px_1px_#222]">
          ble ledges to find the closest one. An offset is added away from the ledge using its normal to prevent corners from having the same location. If not, traversing against a corner would be inconsistent.
        </div>
      </div>

      <svg className="absolute top-0 left-0 overflow-visible" width="1920" height="860" fill="none" aria-hidden>
        {WIRES.map((w) => (
          <path key={w.d} d={w.d} stroke={COLORS[w.kind]} strokeOpacity={w.kind === "exec" ? 0.95 : 0.8} strokeWidth={w.kind === "exec" ? 2.500 : 1.600} />
        ))}
        {[648, 1240, 1481].map((x) => (
          <circle key={x} cx={x} cy="538" r="3" fill={COLORS.int} />
        ))}
      </svg>

      <Node box={{ x: 262, y: 365, w: 89, h: 47 }} tone="gray" title="">
        <div className="pt-0.5">
          <PinRow right={{ kind: "exec", label: "True" }} />
          <PinRow right={{ kind: "exec", label: "False" }} />
        </div>
      </Node>
      <Getter x={383} y={397} label="Ledges" kind="object" array />
      <Node box={{ x: 463, y: 365, w: 97, h: 77 }} tone="gray" icon={<LoopIcon />} title="For Each Loop">
        <div className="pt-0.5">
          <PinRow left={{ kind: "exec", label: "Exec" }} right={{ kind: "exec", label: "Loop Body" }} />
          <PinRow left={{ kind: "object", label: "Array", array: true }} right={{ kind: "object", label: "Array Element" }} />
          <PinRow right={{ kind: "int", label: "Array Index" }} />
          <PinRow right={{ kind: "exec", label: "Completed" }} />
        </div>
      </Node>
      <Node box={{ x: 391, y: 453, w: 71, h: 46 }} tone="purple" icon={<ReturnIcon />} title="Return Node">
        <div className="pt-0.5">
          <PinRow left={{ kind: "exec" }} />
          <PinRow left={{ kind: "object", label: "Return Value", hollow: true }} />
        </div>
      </Node>
      <Node box={{ x: 583, y: 557, w: 71, h: 46 }} tone="purple" icon={<ReturnIcon />} title="Return Node">
        <div className="pt-0.5">
          <PinRow left={{ kind: "exec" }} />
          <PinRow left={{ kind: "object", label: "Return Value" }} />
        </div>
      </Node>
      <Getter x={415} y={581} label="Ledges" kind="object" array />
      <Getter x={415} y={613} label="Closest Index" kind="int" badge="V." />
      <MathNode
        box={{ x: 487, y: 589, w: 84, h: 38 }}
        inputs={[<Pin kind="object" array />, <Pin kind="int" />]}
        output={<Pin kind="object" />}
        symbol="GET"
        big
        tall
      >
        <div className="absolute inset-x-[23px] inset-y-px grid grid-cols-3 gap-1">
          {Array.from({ length: 9 }, (_, i) => (
            <span key={i} className="bg-[#2c5a70]" />
          ))}
        </div>
      </MathNode>

      <Getter x={623} y={461} label="Actor Location" kind="vector" badge="f" />
      <SplineNode x={711} y={397} title="Find Location Closest to World Location" />
      <SplineNode x={711} y={485} title="Find Up Vector Closest to World Location" />
      <MathNode
        box={{ x: 904, y: 502, w: 81, h: 35 }}
        inputs={[
          <Pin kind="vector" ring />,
          <>
            <Pin kind="float" ring />
            <input aria-label="乘数" defaultValue="10.0" className={clsx(valueBox, "w-[19px]")} />
          </>,
        ]}
        output={<Pin kind="vector" ring />}
        symbol="×"
        addPin
      />
      <MathNode
        box={{ x: 991, y: 438, w: 77, h: 33 }}
        inputs={[<Pin kind="vector" ring />, <Pin kind="vector" ring />]}
        output={<Pin kind="vector" ring />}
        symbol="+"
        addPin
      />
      <Getter x={1087} y={461} label="Actor Location" kind="vector" badge="f" />
      <Node box={{ x: 1167, y: 429, w: 90, h: 45 }} tone="green" icon={<GreenF />} title="Distance (Vector)">
        <div className="pt-px">
          <PinRow left={{ kind: "vector", label: "V1" }} right={{ kind: "float", label: "Return Value" }} />
          <PinRow left={{ kind: "vector", label: "V2" }} />
        </div>
      </Node>
      <Getter x={1183} y={477} w={72} label="Closest Distance" kind="float" badge="V." />
      <MathNode
        box={{ x: 1271, y: 453, w: 63, h: 33 }}
        inputs={[<Pin kind="float" ring />, <Pin kind="float" ring />]}
        output={<Pin kind="bool" ring />}
        symbol="<"
      />
      <MathNode
        box={{ x: 1271, y: 493, w: 82, h: 36 }}
        inputs={[
          <Pin kind="int" ring />,
          <>
            <Pin kind="int" ring />
            <input aria-label="比较值" defaultValue="0" className={clsx(valueBox, "w-[9px]")} />
          </>,
        ]}
        output={<Pin kind="bool" ring />}
        symbol="=="
      />
      <MathNode
        box={{ x: 1375, y: 469, w: 78, h: 33 }}
        inputs={[<Pin kind="bool" />, <Pin kind="bool" />]}
        output={<Pin kind="bool" />}
        symbol="OR"
        big
        addPin
      />
      <Node box={{ x: 1415, y: 365, w: 88, h: 47 }} tone="gray" icon={<SplitIcon />} title="Branch">
        <div className="pt-0.5">
          <PinRow left={{ kind: "exec" }} right={{ kind: "exec", label: "True" }} />
          <PinRow left={{ kind: "bool", label: "Condition" }} right={{ kind: "exec", label: "False", hollow: true }} />
        </div>
      </Node>
      <MathNode box={{ x: 1527, y: 374, w: 90, h: 38 }} inputs={[<Pin kind="exec" />, <Pin kind="float" />]} output={null} tall />
      <MathNode box={{ x: 1527, y: 430, w: 90, h: 38 }} inputs={[<Pin kind="exec" />, <Pin kind="int" />]} output={null} tall />
    </div>
  );
}

function GraphPanel() {
  return (
    <main className="flex min-w-0 flex-1 flex-col">
      <div className="flex h-[29px] items-end">
        <DockTab icon={<ViewportIcon />} label="视口" className="w-[163px]" />
        <DockTab icon={<FnGlyph className="w-3 text-center text-[18px]" />} label="GetLedgeTransf..." className="w-[161px]" />
        <DockTab icon={<FnGlyph className="w-3 text-center text-[18px]" />} label="FindLedgeClose..." active accent className="w-40 text-white" />
      </div>
      <div className="relative flex-1 overflow-hidden bg-[#262626]">
        <div className="absolute inset-0 bg-[linear-gradient(#1d1d1d_1px,#222_1px,#222_2px,transparent_2px),linear-gradient(90deg,#1d1d1d_1px,#222_1px,#222_2px,transparent_2px),linear-gradient(#2a2a2a_1px,transparent_1px),linear-gradient(90deg,#2a2a2a_1px,transparent_1px)] bg-[size:128px_128px,128px_128px,16px_16px,16px_16px] bg-[position:0_69px,120px_0,0_69px,120px_0]" />
        <GraphCanvas />
        <div className="pointer-events-none absolute inset-0 shadow-[inset_0_0_50px_rgba(0,0,0,0.45)]" />
        <div className="absolute right-2.5 bottom-2 text-[62px] leading-[80px] font-medium text-[#4a4a4a]">蓝图</div>

        <div className="relative flex h-[38px] items-center bg-[#101010]/90 text-[#808080]">
          <button type="button" aria-label="书签" className="ml-2 flex items-center gap-1 text-[#c0c0c0]">
            <svg width="12" height="16" viewBox="0 0 13 16" aria-hidden>
              <path d="M0 0h8v2H3v9l-3 2z" fill="#6a6a6a" />
              <path d="M4 3h8v13l-4-4-4 4z" fill="currentColor" />
            </svg>
            <ChevronDown size={14} />
          </button>
          <span className="ml-2 h-[34px] w-[3px] bg-[#1b1b1b]" />
          <button type="button" aria-label="后退" className="ml-2 text-white"><ArrowIcon /></button>
          <button type="button" aria-label="前进" className="ml-5"><ArrowIcon flip /></button>
          <span className="ml-2.5 h-[34px] w-[3px] bg-[#1b1b1b]" />
          <FnGlyph className="ml-3.5 w-4 text-center text-[26px] text-[#d0d0d0]" />
          <div className="ml-[18px] flex items-center gap-1.5 text-[19px] leading-6">
            <a href="#blueprint">LevelBlock_Traversable</a>
            <svg width="14" height="16" viewBox="0 0 14 16" fill="none" stroke="#fff" strokeWidth="2" aria-hidden>
              <path d="m4 1 7 7-7 7" />
            </svg>
            <a href="#function">FindLedgeClosestToActor</a>
          </div>
          <span className="mr-1 ml-auto text-[20px] leading-6 font-medium text-[#383838]">缩放-4</span>
        </div>
      </div>
    </main>
  );
}

function DetailsPanel() {
  return (
    <aside className="mr-[3px] flex w-[367px] shrink-0 flex-col">
      <div className="flex h-[29px] items-end">
        <DockTab icon={<PencilIcon size={15} />} label="细节" active className="w-40" />
      </div>
      <div className="flex-1 bg-[#242424]" />
    </aside>
  );
}

// ---------- bottom ----------

function ResultsPanel() {
  return (
    <section className="mr-1 ml-1">
      <div className="flex h-[30px] items-end">
        <DockTab icon={<span className="flex w-4 justify-center"><LogIcon /></span>} label="编译器结果" className="w-[162px]" />
        <DockTab icon={<Search size={16} />} label="查找结果" active className="w-40" />
      </div>
      <div className="h-[115px] bg-[#242424] px-0.5 pt-[7px]">
        <div className="flex gap-1 pr-2.5 pl-2">
          <label className="flex h-[22px] flex-1 items-center gap-[7px] rounded-full border border-[#353535] bg-[#0f0f0f] pl-1">
            <Search size={15} />
            <input type="text" aria-label="查找引用" placeholder="输入函数或事件名称来查找引用......" className="w-full min-w-0 bg-transparent outline-none placeholder:text-[#505050]" />
          </label>
          <button type="button" aria-label="在所有蓝图中查找" className="flex h-[22px] w-[45px] items-center justify-center rounded border border-[#121212] bg-[#383838] pb-0.5">
            <BinocularsIcon />
          </button>
        </div>
        <div className="mt-[5px] h-[63px] bg-[#1a1a1a]" />
      </div>
    </section>
  );
}

function StatusBar() {
  const cell = "flex h-full shrink-0 items-center gap-1.5 bg-[#242424]";
  return (
    <footer className="mt-1 mr-[3px] ml-px flex h-8 gap-0.5">
      <button type="button" className={clsx(cell, "w-[118px] pl-2.5")}>
        <BrowseIcon size={16} />
        <span className="-ml-px">内容侧滑菜单</span>
      </button>
      <button type="button" className={clsx(cell, "w-[92px] pl-3")}>
        <LogIcon />
        输出日志
      </button>
      <div className={clsx(cell, "w-[398px] pl-3.5")}>
        <button type="button" className="flex items-center gap-1">
          <TerminalIcon />
          Cmd
          <ChevronDown size={14} />
        </button>
        <input
          type="text"
          aria-label="控制台命令"
          placeholder="输入控制台命令"
          className="ml-1 h-[22px] w-[300px] rounded border border-[#353535] bg-[#0f0f0f] px-2 text-xs outline-none placeholder:text-[#505050]"
        />
      </div>
      <div className="flex-1 bg-[#242424]" />
      <button type="button" className={clsx(cell, "w-[110px] pl-3")}>
        <SavedIcon />
        <span className="-ml-px">所有已保存</span>
      </button>
      <button type="button" className={clsx(cell, "w-[121px] pl-3.5")}>
        <BranchIcon />
        版本控制
        <ChevronDown size={14} className="-ml-0.5" />
      </button>
    </footer>
  );
}

export default function App() {
  return (
    <div className="flex min-h-screen flex-col bg-black font-['Roboto','Noto_Sans_CJK_SC',sans-serif] text-[13px] leading-4 text-[#c0c0c0]">
      <div className="flex flex-1 flex-col bg-[#151515]">
        <TitleBar />
        <Toolbar />
        <div className="ml-1 flex flex-1 gap-[5px]">
          <ComponentsPanel />
          <GraphPanel />
          <DetailsPanel />
        </div>
        <ResultsPanel />
        <StatusBar />
      </div>
      <div className="flex h-12 flex-col justify-end">
        <div className="h-px bg-linear-to-r from-[#5c6a2c] via-[#8a7a30] to-[#6a6a4a]" />
      </div>
    </div>
  );
}
